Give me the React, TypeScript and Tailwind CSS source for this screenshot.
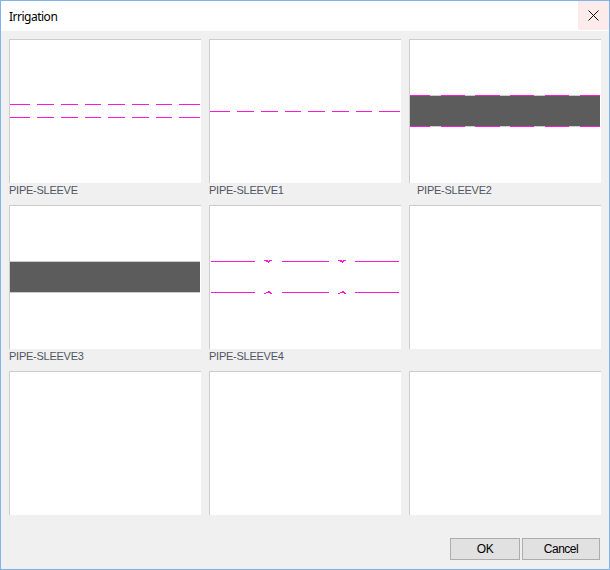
const CELLS = [
  { label: "PIPE-SLEEVE", kind: "double" },
  { label: "PIPE-SLEEVE1", kind: "single" },
  { label: "PIPE-SLEEVE2", kind: "band", indent: true },
  { label: "PIPE-SLEEVE3", kind: "solid" },
  { label: "PIPE-SLEEVE4", kind: "breaks" },
  { label: "", kind: "empty" },
  { label: "", kind: "empty" },
  { label: "", kind: "empty" },
  { label: "", kind: "empty" },
];

const DASHES = [[0, 20], [27, 44], [51, 68], [75, 91], [98, 115], [122, 139], [146, 162], [169, 190]];
const BAND_DASHES = [[0, 20], [31, 55], [65, 90], [100, 124], [135, 159], [170, 190]];
const BREAK_DASHES = [[1, 45], [72, 119], [145, 189]];
const PINK = "#ff19d5";

function Dashes({ y, dashes }: { y: number; dashes: number[][] }) {
  return (
    <>
      {dashes.map(([a, b]) => (
        <rect key={a} x={a} y={y} width={b - a} height="1" fill={PINK} />
      ))}
    </>
  );
}

// little broken-line ticks in the PIPE-SLEEVE4 preview
function Ticks({ x }: { x: number }) {
  return (
    <g fill={PINK} transform={`translate(${x} 0)`}>
      <rect x="0" y="54" width="4" height="1" />
      <rect x="5" y="54" width="3" height="1" />
      <rect x="2" y="55" width="4" height="1" />
      <rect x="4" y="56" width="1" height="1" />
      <rect x="4" y="85" width="2" height="1" />
      <rect x="2" y="86" width="5" height="1" />
      <rect x="0" y="87" width="2" height="1" />
      <rect x="6" y="87" width="2" height="1" />
    </g>
  );
}

function Preview({ kind }: { kind: string }) {
  if (kind === "empty") return null;
  return (
    <svg width="191" height="143" className="block" shapeRendering="crispEdges">
      {kind === "double" && (
        <>
          <Dashes y={64} dashes={DASHES} />
          <Dashes y={77} dashes={DASHES} />
        </>
      )}
      {kind === "single" && <Dashes y={71} dashes={DASHES} />}
      {kind === "band" && (
        <>
          <rect x="0" y="55" width="190" height="32" fill="#cccccc" />
          <rect x="0" y="56" width="190" height="30" fill="#5c5c5c" />
          <Dashes y={55} dashes={BAND_DASHES} />
          <Dashes y={86} dashes={BAND_DASHES} />
        </>
      )}
      {kind === "solid" && (
        <>
          <rect x="0" y="55" width="190" height="32" fill="#cccccc" />
          <rect x="0" y="56" width="190" height="30" fill="#5c5c5c" />
        </>
      )}
      {kind === "breaks" && (
        <>
          <Dashes y={55} dashes={BREAK_DASHES} />
          <Dashes y={86} dashes={BREAK_DASHES} />
          <Ticks x={54} />
          <Ticks x={128} />
        </>
      )}
    </svg>
  );
}

export default function App() {
  return (
    <div className="w-[610px] h-[570px] flex flex-col bg-[#f0f0f0] border border-[#7eb4ea] font-['Liberation_Sans',Arial,sans-serif]">
      {/* Title bar */}
      <div className="h-[30px] flex justify-between bg-white shrink-0">
        <span className="pl-2 pt-[8px] text-[12px] leading-[15px] tracking-[-0.5px] text-black font-['Noto_Sans',sans-serif]">Irrigation</span>
        <button className="w-[31px] h-[29px] flex items-center justify-center bg-[#fdeaea]">
          <svg width="11" height="11" viewBox="0 0 11 11">
            <path d="M0.5 0.5l10 10M10.5 0.5l-10 10" stroke="#111" strokeWidth="1" fill="none" />
          </svg>
        </button>
      </div>

      {/* Thumbnails */}
      <div className="grid grid-cols-[192px_192px_192px] gap-x-2 pl-2 pt-2">
        {CELLS.map((cell, i) => (
          <div key={i} className="h-[166px]">
            <div className="w-[192px] h-[144px] bg-white border-l border-t border-[#cccccc]">
              <Preview kind={cell.kind} />
            </div>
            <div className={`text-[11px] leading-[14px] tracking-[-0.25px] text-[#505564] ${cell.indent ? "pl-2" : ""}`}>
              {cell.label}
            </div>
          </div>
        ))}
      </div>

      {/* Footer */}
      <div className="flex justify-end gap-[2px] pr-[9px] pt-[1px]">
        <button className="w-[70px] h-[22px] bg-[#e1e1e1] border border-[#adadad] text-[12px] tracking-[-0.3px] text-black">OK</button>
        <button className="w-[78px] h-[22px] bg-[#e1e1e1] border border-[#adadad] text-[12px] tracking-[-0.5px] text-black">Cancel</button>
      </div>
    </div>
  );
}
